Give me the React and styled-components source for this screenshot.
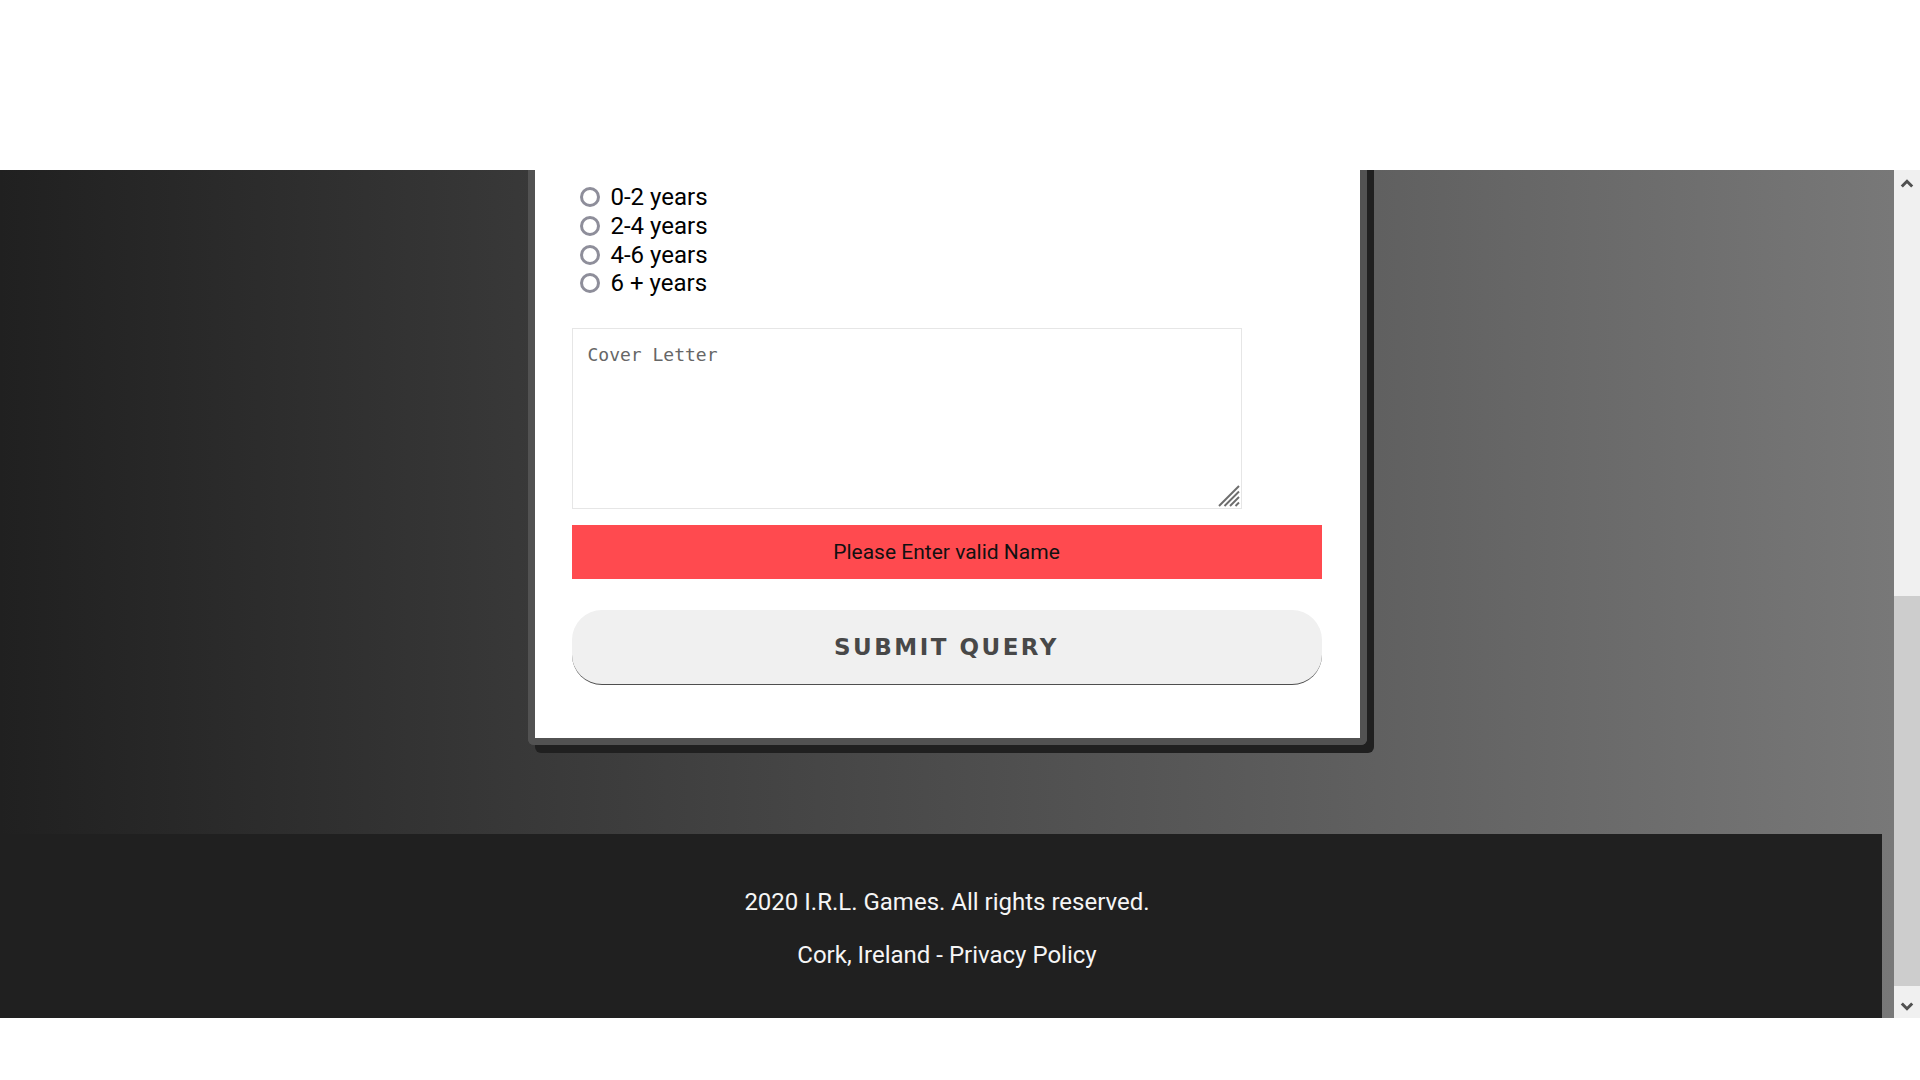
import React from "react";
import styled, { createGlobalStyle } from "styled-components";

const GlobalStyle = createGlobalStyle`
  body {
    margin: 0;
    background: #ffffff;
    font-family: Roboto, "Liberation Sans", sans-serif;
  }
`;

const TopSpace = styled.div`
  height: 170px;
`;

const Window = styled.div`
  display: flex;
  height: 848px;
`;

const Viewport = styled.div`
  flex: 1;
  display: flex;
  flex-direction: column;
  overflow: hidden;
  background: linear-gradient(to right, #202020, #787878);
`;

const Main = styled.main`
  height: 664px;
  display: flex;
  justify-content: center;
  align-items: flex-start;
`;

// card is scrolled: its top edge sits above the visible area
const Card = styled.form`
  width: 750px;
  margin-top: -20px;
  box-sizing: content-box;
  background: #ffffff;
  border: 7px solid #525252;
  border-top: 0;
  border-radius: 0 0 6px 6px;
  box-shadow: 7px 8px 0 #202020;
  padding: 33px 38px 53px 37px;
  display: flex;
  flex-direction: column;
`;

const RadioList = styled.div`
  display: flex;
  flex-direction: column;
`;

const RadioRow = styled.label`
  display: flex;
  align-items: center;
  gap: 11px;
  height: 28.7px;
  font-size: 24px;
  color: #000;
`;

const RadioDot = styled.span`
  flex: none;
  width: 14px;
  height: 14px;
  margin-left: 8px;
  border: 3px solid #8e8e9a;
  border-radius: 50%;
  box-sizing: content-box;
`;

const LetterBox = styled.div`
  position: relative;
  margin-top: 30px;
  width: 670px;
  height: 181px;
`;

const CoverLetter = styled.textarea`
  display: block;
  width: 100%;
  height: 100%;
  box-sizing: border-box;
  border: 1px solid #e6e6e6;
  padding: 15px 15px;
  resize: none;
  font-family: "DejaVu Sans Mono", "Liberation Mono", monospace;
  font-size: 18px;
  color: #222;
  outline: none;
  &::placeholder {
    color: #666;
  }
`;

const Grip = styled.svg`
  position: absolute;
  right: 2px;
  bottom: 2px;
  pointer-events: none;
`;

const ErrorBar = styled.div`
  margin-top: 16px;
  height: 54px;
  background: #ff4a4f;
  display: flex;
  align-items: center;
  justify-content: center;
  font-size: 21px;
  color: #111;
`;

const SubmitButton = styled.button`
  margin-top: 31px;
  height: 75px;
  box-sizing: border-box;
  border: 0;
  border-bottom: 1.5px solid #4f4f4f;
  border-radius: 30px;
  background: #f0f0f0;
  font-family: "DejaVu Sans", Verdana, sans-serif;
  font-weight: bold;
  font-size: 23px;
  letter-spacing: 2.5px;
  text-transform: uppercase;
  color: #484848;
  cursor: pointer;
`;

const Footer = styled.footer`
  height: 184px;
  margin-right: 12px;
  padding-left: 12px;
  background: #202020;
  color: #f5f5f5;
  font-size: 24px;
  display: flex;
  flex-direction: column;
  align-items: center;
  padding-top: 54px;
  box-sizing: border-box;
  gap: 25px;
`;

const FooterLine = styled.p`
  margin: 0;
  line-height: 28px;
`;

const Scrollbar = styled.div`
  width: 26px;
  background: #f0f0f0;
  display: flex;
  flex-direction: column;
`;

const ArrowButton = styled.div`
  height: ${(p) => (p.$up ? "26px" : "32px")};
  display: flex;
  align-items: ${(p) => (p.$up ? "center" : "flex-end")};
  justify-content: center;
  padding-bottom: ${(p) => (p.$up ? "0" : "7px")};
  box-sizing: border-box;
`;

const Track = styled.div`
  flex: 1;
  display: flex;
  flex-direction: column;
  padding-top: 400px;
`;

const Thumb = styled.div`
  flex: 1;
  background: #cdcdcd;
`;

const Chevron = ({ up }) => (
  <svg width="14" height="9" viewBox="0 0 14 9">
    <polyline
      points={up ? "1.8,7.5 7,2.3 12.2,7.5" : "1.8,1.5 7,6.7 12.2,1.5"}
      fill="none"
      stroke="#505050"
      strokeWidth="3"
    />
  </svg>
);

const experience = ["0-2 years", "2-4 years", "4-6 years", "6 + years"];

export default function App() {
  return (
    <>
      <GlobalStyle />
      <TopSpace />
      <Window>
        <Viewport>
          <Main>
            <Card onSubmit={(e) => e.preventDefault()}>
              <RadioList>
                {experience.map((item) => (
                  <RadioRow key={item}>
                    <RadioDot />
                    {item}
                  </RadioRow>
                ))}
              </RadioList>
              <LetterBox>
                <CoverLetter placeholder="Cover Letter" />
                <Grip width="22" height="22" viewBox="0 0 22 22">
                  <g stroke="#6d6d6d" strokeWidth="2">
                    <line x1="1" y1="21" x2="21" y2="1" />
                    <line x1="6.5" y1="21" x2="21" y2="6.5" />
                    <line x1="12" y1="21" x2="21" y2="12" />
                    <line x1="17.5" y1="21" x2="21" y2="17.5" />
                  </g>
                </Grip>
              </LetterBox>
              <ErrorBar>Please Enter valid Name</ErrorBar>
              <SubmitButton type="submit">Submit Query</SubmitButton>
            </Card>
          </Main>
          <Footer>
            <FooterLine>2020 I.R.L. Games. All rights reserved.</FooterLine>
            <FooterLine>Cork, Ireland - Privacy Policy</FooterLine>
          </Footer>
        </Viewport>
        <Scrollbar>
          <ArrowButton $up>
            <Chevron up />
          </ArrowButton>
          <Track>
            <Thumb />
          </Track>
          <ArrowButton>
            <Chevron />
          </ArrowButton>
        </Scrollbar>
      </Window>
    </>
  );
}
